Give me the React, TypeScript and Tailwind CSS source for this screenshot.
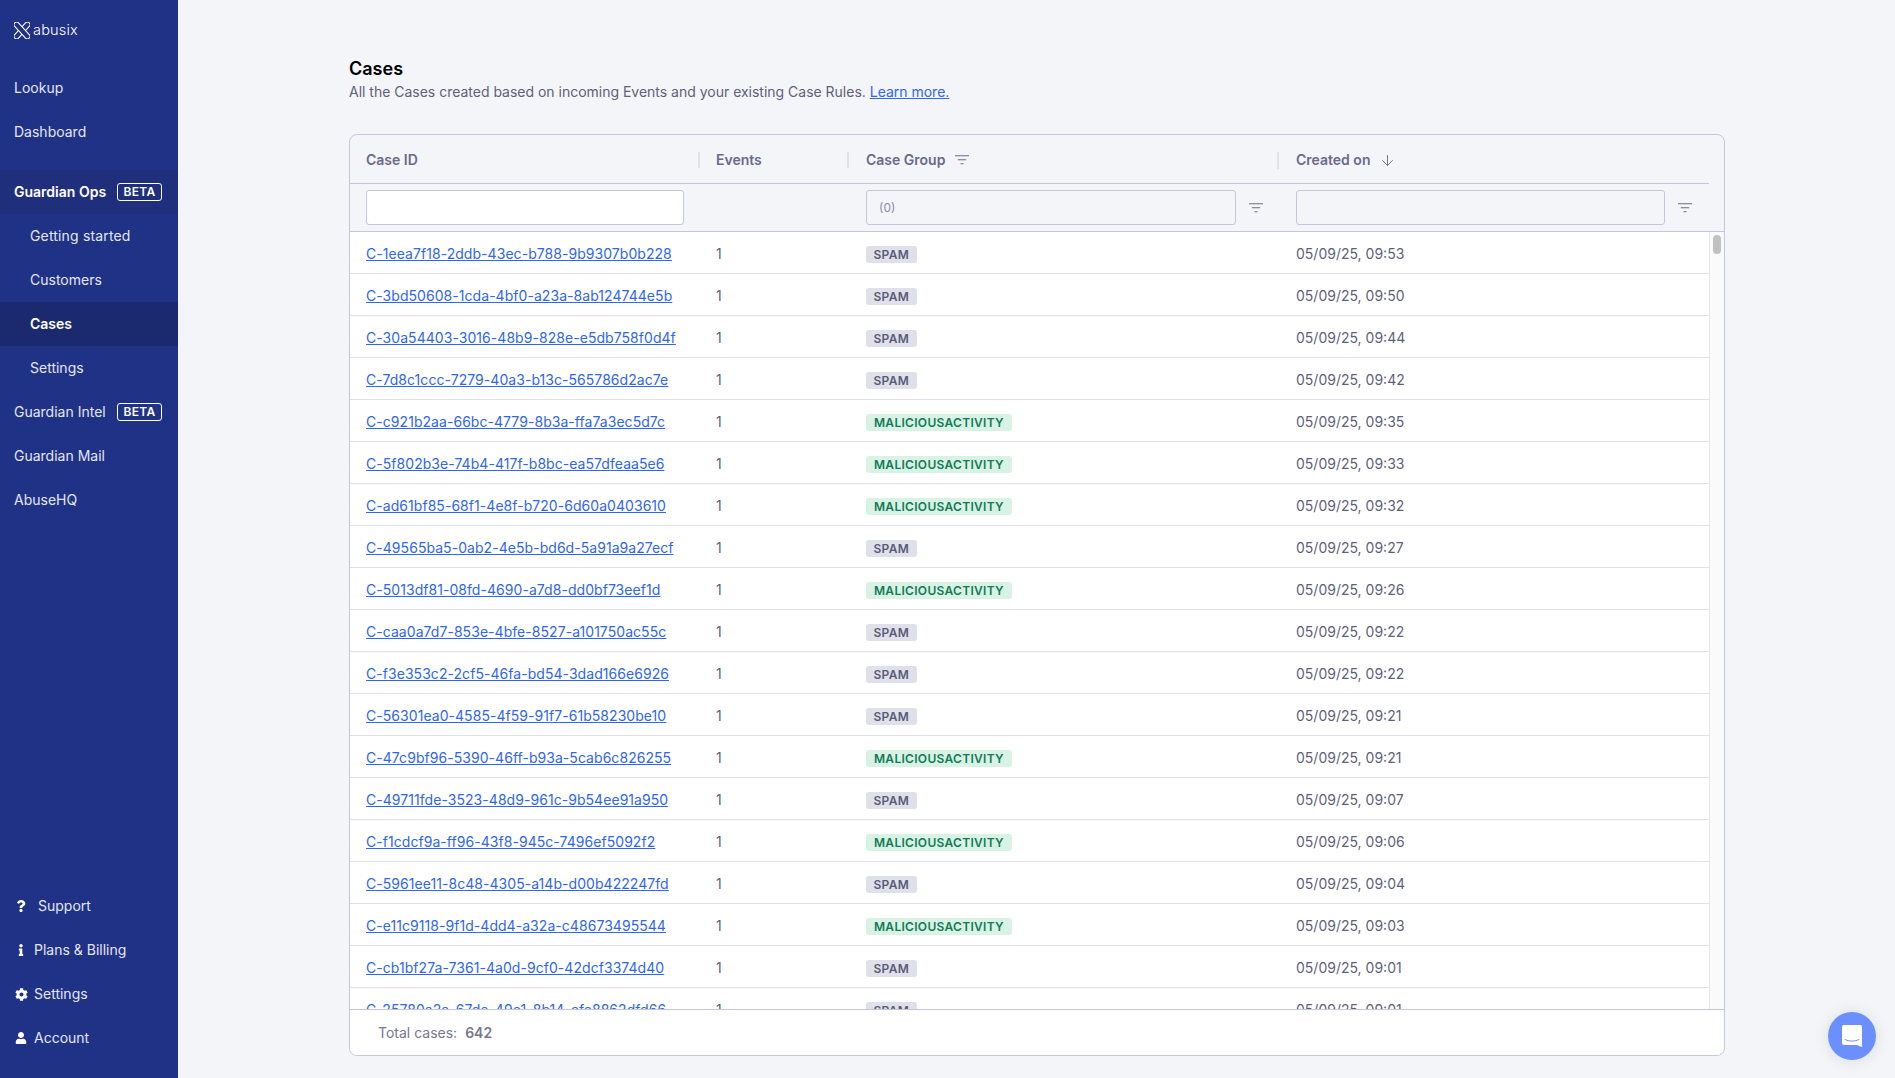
import { ArrowDown } from "lucide-react";
import { FaCog, FaInfo, FaQuestion, FaUser } from "react-icons/fa";

const rows: [string, boolean, string][] = [
  ["C-1eea7f18-2ddb-43ec-b788-9b9307b0b228", false, "05/09/25, 09:53"],
  ["C-3bd50608-1cda-4bf0-a23a-8ab124744e5b", false, "05/09/25, 09:50"],
  ["C-30a54403-3016-48b9-828e-e5db758f0d4f", false, "05/09/25, 09:44"],
  ["C-7d8c1ccc-7279-40a3-b13c-565786d2ac7e", false, "05/09/25, 09:42"],
  ["C-c921b2aa-66bc-4779-8b3a-ffa7a3ec5d7c", true, "05/09/25, 09:35"],
  ["C-5f802b3e-74b4-417f-b8bc-ea57dfeaa5e6", true, "05/09/25, 09:33"],
  ["C-ad61bf85-68f1-4e8f-b720-6d60a0403610", true, "05/09/25, 09:32"],
  ["C-49565ba5-0ab2-4e5b-bd6d-5a91a9a27ecf", false, "05/09/25, 09:27"],
  ["C-5013df81-08fd-4690-a7d8-dd0bf73eef1d", true, "05/09/25, 09:26"],
  ["C-caa0a7d7-853e-4bfe-8527-a101750ac55c", false, "05/09/25, 09:22"],
  ["C-f3e353c2-2cf5-46fa-bd54-3dad166e6926", false, "05/09/25, 09:22"],
  ["C-56301ea0-4585-4f59-91f7-61b58230be10", false, "05/09/25, 09:21"],
  ["C-47c9bf96-5390-46ff-b93a-5cab6c826255", true, "05/09/25, 09:21"],
  ["C-49711fde-3523-48d9-961c-9b54ee91a950", false, "05/09/25, 09:07"],
  ["C-f1cdcf9a-ff96-43f8-945c-7496ef5092f2", true, "05/09/25, 09:06"],
  ["C-5961ee11-8c48-4305-a14b-d00b422247fd", false, "05/09/25, 09:04"],
  ["C-e11c9118-9f1d-4dd4-a32a-c48673495544", true, "05/09/25, 09:03"],
  ["C-cb1bf27a-7361-4a0d-9cf0-42dcf3374d40", false, "05/09/25, 09:01"],
  ["C-25780a2a-67dc-49e1-8b14-cfe8862dfd66", false, "05/09/25, 09:01"],
];

const cols = "grid grid-cols-[348px_149px_430px_1fr]";

function Logo() {
  return (
    <div className="flex h-[58px] items-center gap-[3px] pl-[14px]">
      <svg width="16" height="17" viewBox="0 0 16 17" fill="none" stroke="white" strokeWidth="1.100">
        <rect x="-2.500" y="5.900" width="21" height="5.200" rx="2.600" transform="rotate(-47 8 8.500)" />
        <rect x="-2.500" y="5.900" width="21" height="5.200" rx="2.600" fill="#203285" transform="rotate(47 8 8.500)" />
      </svg>
      <span className="text-[14.500px] leading-none font-light tracking-[0.2px] text-white">abusix</span>
    </div>
  );
}

function Beta() {
  return (
    <span className="ml-auto flex h-[18px] w-[45px] items-center justify-center rounded-[3px] border border-white text-[12px] leading-none font-semibold tracking-[0.3px] text-white">
      BETA
    </span>
  );
}

function NavItem({ label, sub, bold, bg, beta, wide }: { label: string; sub?: boolean; bold?: boolean; bg?: string; beta?: boolean; wide?: boolean }) {
  return (
    <div className={`flex h-11 items-center pr-4 ${sub ? "pl-[30px]" : "pl-[14px]"} ${bold ? "font-semibold text-white" : "text-[#e3e6f6]"} ${wide ? "tracking-[0.16px]" : ""} ${bg ?? ""}`}>
      <span>{label}</span>
      {beta && <Beta />}
    </div>
  );
}

function BottomItem({ icon, label, gap }: { icon: React.ReactNode; label: string; gap: string }) {
  return (
    <div className="flex h-11 items-center pl-[14px] text-[#e3e6f6]">
      <span className="flex w-3.5 justify-center text-white">{icon}</span>
      <span className={gap}>{label}</span>
    </div>
  );
}

function FilterIcon() {
  return (
    <svg width="14" height="10" viewBox="0 0 14 10" fill="none" stroke="#6c6c8c" strokeWidth="1.100">
      <path d="M0 .8h14M2.800 4.800h8.400M5.500 8.800h3" />
    </svg>
  );
}

function Badge({ malicious }: { malicious: boolean }) {
  return malicious ? (
    <span className="rounded-[3px] bg-[#d8f3e5] px-2 py-px text-[12px] leading-[14px] font-semibold tracking-[0.3px] text-[#137a57]">
      MALICIOUSACTIVITY
    </span>
  ) : (
    <span className="rounded-[3px] bg-[#dfe0e9] px-[7.500px] py-px text-[12px] leading-[14px] font-semibold tracking-[0.3px] text-[#5b5b78]">
      SPAM
    </span>
  );
}

export default function App() {
  return (
    <div className="flex h-[1078px] overflow-hidden bg-[#f4f5f8] font-['Inter',sans-serif] text-sm">
      <aside className="flex w-[178px] shrink-0 flex-col bg-[#203285] pt-[1px] pb-[18px]">
        <Logo />
        <div className="mt-[7px]">
          <NavItem label="Lookup" />
          <NavItem label="Dashboard" />
        </div>
        <div className="mt-[16px]">
          <NavItem label="Guardian Ops" bold bg="bg-[#1f2f7c]" beta />
          <NavItem label="Getting started" sub wide />
          <NavItem label="Customers" sub />
          <NavItem label="Cases" sub bold bg="bg-[#1b2a6e]" />
          <NavItem label="Settings" sub />
          <NavItem label="Guardian Intel" beta />
          <NavItem label="Guardian Mail" />
          <NavItem label="AbuseHQ" />
        </div>
        <div className="mt-auto">
          <BottomItem icon={<FaQuestion size={12} />} label="Support" gap="ml-[10px]" />
          <BottomItem icon={<FaInfo size={12} />} label="Plans & Billing" gap="ml-[6px]" />
          <BottomItem icon={<FaCog size={13} />} label="Settings" gap="ml-[6px]" />
          <BottomItem icon={<FaUser size={12} />} label="Account" gap="ml-[6px]" />
        </div>
      </aside>

      <main className="flex min-w-0 flex-1 flex-col pt-[57px] pr-[170px] pb-[22px] pl-[171px]">
        <h1 className="text-lg leading-6 font-semibold text-black">Cases</h1>
        <p className="mt-[1px] leading-5 tracking-[-0.01px] text-[#5f5f7c]">
          All the Cases created based on incoming Events and your existing Case Rules.{" "}
          <a className="text-[#2f66ea] underline">Learn more.</a>
        </p>

        <div className="mt-[32px] flex min-h-0 flex-1 flex-col overflow-hidden rounded-lg border border-[#c5c6dd]">
          <div className="mr-[15px] h-[49px] shrink-0 border-b border-[#c5c6dd] pt-[2px]">
            <div className={`${cols} h-full items-center font-semibold text-[#6a6a8a]`}>
              <div className="pl-4">Case ID</div>
              <div className="border-l-2 border-[#e0e1e9] pl-4 leading-4">Events</div>
              <div className="flex items-center gap-2.5 border-l-2 border-[#e0e1e9] pl-[17px] leading-4">
                Case Group
                <FilterIcon />
              </div>
              <div className="flex items-center gap-[9px] border-l-2 border-[#e0e1e9] pl-[17px] leading-4">
                Created on
                <ArrowDown size={17} strokeWidth={1.300} />
              </div>
            </div>
          </div>

          <div className="h-[48px] shrink-0 border-b border-[#c5c6dd]">
            <div className={`${cols} mr-[15px] h-full items-center`}>
              <div className="pl-4">
                <div className="h-[35px] w-[318px] rounded-[3px] border border-[#c5c6dd] bg-white" />
              </div>
              <div />
              <div className="flex items-center pl-[19px]">
                <div className="flex h-[35px] w-[370px] items-center rounded-[3px] border border-[#c5c6dd] pl-3 text-xs text-[#8a8aa3]">(0)</div>
                <span className="ml-[13px]"><FilterIcon /></span>
              </div>
              <div className="flex items-center pl-[19px]">
                <div className="h-[35px] w-[369px] rounded-[3px] border border-[#c5c6dd]" />
                <span className="ml-[13px]"><FilterIcon /></span>
              </div>
            </div>
          </div>

          <div className="relative flex min-h-0 flex-1 overflow-hidden bg-white">
            <div className="min-w-0 flex-1">
              {rows.map(([id, malicious, date]) => (
                <div key={id} className={`${cols} h-[42px] items-center border-b border-[#e1e1ea] pt-[2px] text-[#5f5f7c]`}>
                  <div className="pl-4">
                    <a className="tracking-[0.05px] text-[#2f66ea] underline">{id}</a>
                  </div>
                  <div className="pl-[18px]">1</div>
                  <div className="pl-[19px]"><Badge malicious={malicious} /></div>
                  <div className="pl-[19px]">{date}</div>
                </div>
              ))}
            </div>
            <div className="w-[15px] shrink-0 border-l border-[#e6e6ea] bg-[#fafafa] pt-[3px] pl-[3px]">
              <div className="h-[19px] w-2 rounded bg-[#c1c1c1]" />
            </div>
          </div>

          <div className="flex h-[46px] shrink-0 items-center gap-2 border-t border-[#c5c6dd] bg-white pl-7 text-[#77778f]">
            <span>Total cases:</span>
            <span className="font-semibold">642</span>
          </div>
        </div>
      </main>

      <div className="fixed right-[19px] bottom-[18px] flex h-12 w-12 items-center justify-center rounded-full bg-[#6b8fff] shadow-[0_1px_16px_rgba(0,0,0,0.1)]">
        <svg width="22" height="24" viewBox="0 0 22 24" fill="none">
          <path d="M3 1h16a2 2 0 0 1 2 2v20l-5-2H3a2 2 0 0 1-2-2V3a2 2 0 0 1 2-2Z" fill="white" />
          <path d="M4 15.500c4 2.200 10 2.200 14 0" stroke="#6b8fff" strokeWidth="1" strokeLinecap="round" />
        </svg>
      </div>
    </div>
  );
}
